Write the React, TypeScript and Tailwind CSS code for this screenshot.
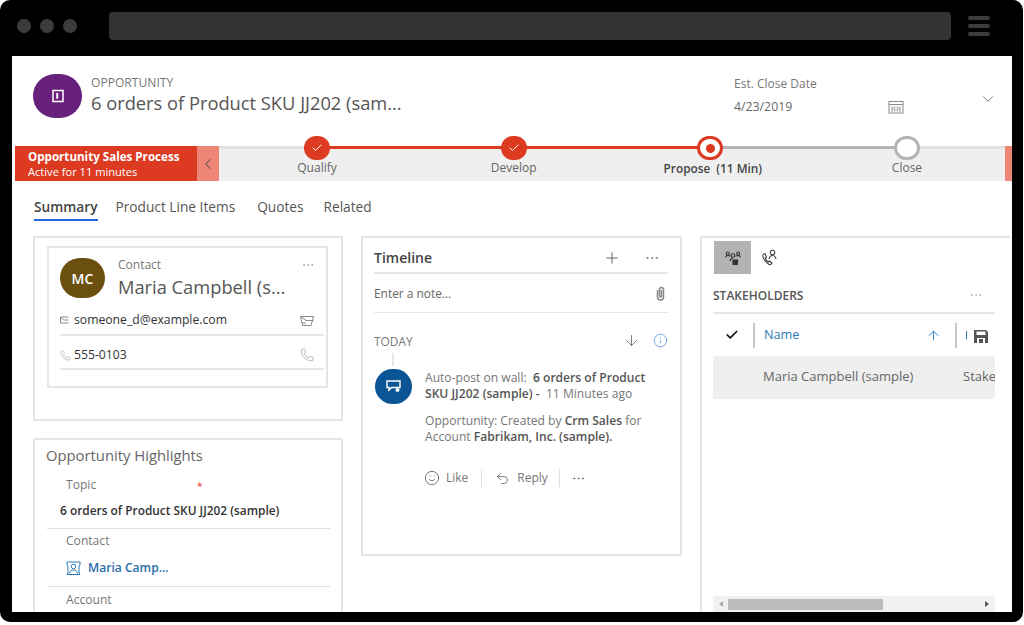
import { ArrowDown, ArrowUp, Check, ChevronDown, ChevronLeft, Info, MoreHorizontal, Phone, Plus, Smile, Undo2 } from "lucide-react";

const FONT = "font-['Open_Sans','Noto_Sans',sans-serif]";

function Step({ label, state }: { label: string; state: "done" | "active" | "todo" }) {
  return (
    <div className="flex w-[100px] flex-col items-center">
      {state === "done" && (
        <div className="flex h-[24px] w-[26px] items-center justify-center rounded-full bg-[#dc3a21]">
          <Check size={12} color="#fff" strokeWidth={2} />
        </div>
      )}
      {state === "active" && (
        <div className="flex h-[24px] w-[26px] items-center justify-center rounded-full border-[3px] border-[#dc3a21] bg-white">
          <div className="h-[9px] w-[9px] rounded-full bg-[#dc3a21]" />
        </div>
      )}
      {state === "todo" && <div className="h-[24px] w-[26px] rounded-full border-[3px] border-[#b4b4b4] bg-white" />}
      <div className={`whitespace-pre leading-[16px] ${state === "active" ? "pl-[5px] text-[11.800px] font-semibold text-[#444]" : "text-[12px] text-[#666]"}`}>
        {label}
      </div>
    </div>
  );
}

function StakeholderIcon() {
  return (
    <svg width="16" height="14" viewBox="0 0 16 14" fill="none" stroke="#333" strokeWidth="1.100">
      <circle cx="2.800" cy="2.500" r="1.500" />
      <circle cx="8" cy="4.500" r="1.800" />
      <circle cx="13.200" cy="2.500" r="1.500" />
      <path d="M.500 6.500c.3-1.300 1.200-2 2.300-2 .8 0 1.500.2 2.800.8M15.500 6.500c-.3-1.300-1.200-2-2.300-2-.8 0-1.500.2-2.800.8" />
      <path d="M5 10c.4-1.700 1.500-3 3-3" />
      <rect x="8" y="9" width="4.500" height="4.500" fill="#333" />
    </svg>
  );
}

function PhoneUserIcon() {
  return (
    <svg width="17" height="17" viewBox="0 0 17 17" fill="none" stroke="#444" strokeWidth="1.100">
      <path d="M2 6c-1 2 3 8 6 9.500 1.500.5 2.500-.5 3-1.500l-2.500-2-1.200 1c-1-.5-2.500-2.500-3-4l1.200-1L4 4.500C3 4.500 2.500 5 2 6z" />
      <circle cx="11.500" cy="3.500" r="2.200" />
      <path d="M8 10c.5-2 1.800-3.500 3.500-3.500S14.500 8 15 10" />
    </svg>
  );
}

function RecordIcon() {
  return (
    <svg width="16" height="16" viewBox="0 0 16 16" fill="none" stroke="#fff">
      <rect x="3" y="2.500" width="10" height="11" strokeWidth="1.500" />
      <rect x="6.500" y="5.500" width="1.500" height="5" fill="#fff" strokeWidth="0.500" />
    </svg>
  );
}

function PostIcon() {
  return (
    <svg width="18" height="16" viewBox="0 0 18 16" fill="none" stroke="#fff" strokeWidth="1.400">
      <path d="M2 2h13v6.500H6.500L4 11V8.500H2z" />
      <circle cx="12.500" cy="11" r="1.800" fill="#fff" strokeWidth="0.500" />
    </svg>
  );
}

function ContactLinkIcon() {
  return (
    <svg width="15" height="14" viewBox="0 0 15 14" fill="none" stroke="#2b7ab8" strokeWidth="1">
      <path d="M1 1h13v3l-1 1v7l1 1.500H1L2 12V5L1 4z" />
      <circle cx="7.500" cy="5.500" r="2.300" />
      <path d="M3.500 12.500c.5-2.500 2-3.500 4-3.500s3.500 1 4 3.500" />
    </svg>
  );
}

function EnvelopeSmall() {
  return (
    <svg width="9" height="8" viewBox="0 0 9 8" fill="none" stroke="#888" strokeWidth="1" className="mb-[2px]">
      <path d="M8.500 1H.500v6h8M.500 1l3 3h5" />
    </svg>
  );
}

function EmailSend() {
  return (
    <svg width="14" height="12" viewBox="0 0 14 12" fill="none" stroke="#888" strokeWidth="1">
      <path d="M.500 1.500h13L11 10.500H2.500L.500 1.500z" />
      <path d="M.500 1.500L6 5.500h7.500" />
      <path d="M2 8h4" />
    </svg>
  );
}

function ClipIcon() {
  return (
    <svg width="9" height="15" viewBox="0 0 9 15" fill="none" stroke="#888" strokeWidth="1.500">
      <path d="M1.500 4v7a3 3 0 0 0 6 0V3.500a2 2 0 0 0-4 0V10a1 1 0 0 0 2 0V4" />
    </svg>
  );
}

function FloppyIcon() {
  return (
    <svg width="14" height="13" viewBox="0 0 14 13" fill="#555">
      <path d="M0 0h12l2 2v11H0z" />
      <rect x="2.500" y="1.500" width="9" height="3.500" fill="#fff" />
      <rect x="3" y="8" width="8" height="5" fill="#fff" />
      <rect x="5" y="9" width="4" height="4" fill="#555" />
    </svg>
  );
}

function App() {
  return (
    <div className={`${FONT} h-[625px] w-[1024px] overflow-hidden bg-white`}>
      <div className="flex h-[622px] w-[1023px] flex-col overflow-hidden rounded-[10px] bg-black">
        <div className="flex h-[56px] shrink-0 items-center pl-[17px] pr-[29px]">
          <div className="flex gap-[9px] pb-[4px]">
            <div className="h-[14px] w-[14px] rounded-full bg-[#3c3c3c]" />
            <div className="h-[14px] w-[14px] rounded-full bg-[#3c3c3c]" />
            <div className="h-[14px] w-[14px] rounded-full bg-[#3c3c3c]" />
          </div>
          <div className="ml-[32px] mb-[4px] h-[28px] w-[842px] rounded-[4px] bg-[#333333]" />
          <div className="ml-[17px] mb-[4px] flex w-[22px] flex-col gap-[4px]">
            <div className="h-[4px] rounded-[2px] bg-[#3c3c3c]" />
            <div className="h-[4px] rounded-[2px] bg-[#3c3c3c]" />
            <div className="h-[4px] rounded-[2px] bg-[#3c3c3c]" />
          </div>
        </div>

        <div className="ml-[12px] flex h-[556px] w-[1000px] flex-col overflow-hidden bg-white">
          <div className="flex h-[89px] shrink-0 items-start pl-[21px] pt-[18px]">
            <div className="flex h-[44px] w-[49px] items-center justify-center rounded-full bg-[#68217a]">
              <RecordIcon />
            </div>
            <div className="ml-[9px] w-[642px]">
              <div className="mt-[1px] text-[12.100px] leading-[16px] text-[#777]">OPPORTUNITY</div>
              <div className="text-[18.300px] leading-[24px] text-[#555]">6 orders of Product SKU JJ202 (sam...</div>
            </div>
            <div className="ml-[1px] w-[171px]">
              <div className="mt-[2px] text-[12px] leading-[16px] text-[#777]">Est. Close Date</div>
              <div className="mt-[6px] flex items-center justify-between pr-[1px] text-[12.300px] leading-[18px] text-[#666]">
                4/23/2019
                <svg width="16" height="14" viewBox="0 0 16 14" fill="none" stroke="#888">
                  <rect x="1" y="1.500" width="14" height="11.500" />
                  <path d="M1 4.500h14" />
                  <path d="M4 6.500v5M6.500 6.500v5M9.500 6.500v5M12 6.500v5" strokeWidth="1.500" stroke="#aaa" />
                </svg>
              </div>
            </div>
            <ChevronDown size={18} color="#666" strokeWidth={1.200} className="ml-[74px] mt-[16px]" />
          </div>

          <div className="relative flex h-[36px] shrink-0 items-stretch">
            <div className="mt-[1px] ml-[3px] flex h-[35px] w-[182px] flex-col justify-center bg-[#dc3a21] pl-[13px] text-white">
              <div className="text-[11.600px] font-bold leading-[15px]">Opportunity Sales Process</div>
              <div className="text-[11.100px] leading-[15px]">Active for 11 minutes</div>
            </div>
            <div className="mt-[1px] flex h-[35px] w-[22px] items-center justify-center bg-[#ee8678]">
              <ChevronLeft size={18} color="#444" strokeWidth={1.300} />
            </div>
            <div className="mt-[1px] flex-1 bg-[#efefef]" />
            <div className="mt-[1px] h-[35px] w-[7px] bg-[#ee8678]" />
            <div className="absolute left-[207px] right-[7px] top-[1px] h-[3px] bg-[#e2e2e2]" />
            <div className="absolute left-[305px] top-[1px] h-[3px] w-[394px] bg-[#dc3a21]" />
            <div className="absolute left-[699px] top-[1px] h-[3px] w-[197px] bg-[#b4b4b4]" />
            <div className="absolute left-[255px] right-[55px] top-[-9px] flex justify-between">
              <Step label="Qualify" state="done" />
              <Step label="Develop" state="done" />
              <Step label="Propose  (11 Min)" state="active" />
              <Step label="Close" state="todo" />
            </div>
          </div>

          <div className="flex h-[55px] shrink-0 items-start pl-[22px] pt-[16px] text-[13.700px] leading-[20px] text-[#555]">
            <div className="border-b-2 border-[#2266e3] pb-[2px] font-semibold text-[#444]">Summary</div>
            <div className="ml-[18px]">Product Line Items</div>
            <div className="ml-[22px]">Quotes</div>
            <div className="ml-[20px]">Related</div>
          </div>

          <div className="flex min-h-0 flex-1 items-start pl-[21px]">
            <div className="flex w-[310px] shrink-0 flex-col gap-[17px]">
              <div className="h-[185px] border-2 border-[#e6e6e6] px-[12px] pt-[8px]">
                <div className="mr-[1px] h-[142px] border-2 border-[#e6e6e6] pl-[11px] pr-[2px] pt-[10px]">
                  <div className="flex">
                    <div className="flex h-[40px] w-[45px] items-center justify-center rounded-full bg-[#6b4f0f] text-[14px] font-semibold text-white">MC</div>
                    <div className="ml-[13px] min-w-0 flex-1">
                      <div className="flex items-center justify-between text-[12px] leading-[12px] text-[#777]">
                        Contact
                        <MoreHorizontal size={14} color="#888" strokeWidth={1} className="mr-[9px]" />
                      </div>
                      <div className="mt-[3px] text-[18.300px] leading-[24px] text-[#555]">Maria Campbell (s...</div>
                    </div>
                  </div>
                  <div className="mt-[2px] flex h-[35px] items-center border-b-2 border-[#e6e6e6] pt-[6px] text-[12.200px] text-[#333]">
                    <EnvelopeSmall />
                    <span className="ml-[5px] flex-1 font-medium">someone_d@example.com</span>
                    <EmailSend />
                    <span className="w-[10px]" />
                  </div>
                  <div className="flex h-[34px] items-center border-b-2 border-[#e6e6e6] pt-[6px] text-[12.200px] text-[#333]">
                    <Phone size={11} color="#888" strokeWidth={1} />
                    <span className="ml-[3px] flex-1 font-medium">555-0103</span>
                    <Phone size={14} color="#888" strokeWidth={1} className="mr-[10px]" />
                  </div>
                </div>
              </div>

              <div className="h-[200px] border-2 border-[#e6e6e6] pl-[11px] pr-[11px] pt-[4px]">
                <div className="text-[14.800px] leading-[22px] text-[#666]">Opportunity Highlights</div>
                <div className="relative ml-[1px] border-b border-[#e0e0e0]">
                  <div className="ml-[19px] mt-[11px] text-[12.100px] leading-[16px] text-[#777]">Topic</div>
                  <div className="absolute left-[150px] top-[2px] text-[10px] text-[#e33]">*</div>
                  <div className="ml-[13px] mt-[9px] mb-[10px] text-[11.900px] font-semibold leading-[16px] text-[#333]">6 orders of Product SKU JJ202 (sample)</div>
                </div>
                <div className="ml-[1px] border-b border-[#e0e0e0]">
                  <div className="ml-[19px] mt-[4px] text-[12.100px] leading-[16px] text-[#777]">Contact</div>
                  <div className="ml-[19px] mt-[11px] mb-[10px] flex items-center gap-[7px] text-[12.100px] font-semibold leading-[16px] text-[#2a6eab]">
                    <ContactLinkIcon />
                    Maria Camp...
                  </div>
                </div>
                <div className="ml-[20px] mt-[5px] text-[12.100px] leading-[16px] text-[#777]">Account</div>
              </div>
            </div>

            <div className="ml-[18px] h-[320px] w-[321px] shrink-0 border-2 border-[#e6e6e6] pl-[11px] pr-[12px] pt-[8px]">
              <div className="flex h-[28px] items-center border-b-2 border-[#e6e6e6] pb-[3px]">
                <div className="flex-1 text-[14px] font-semibold text-[#444]">Timeline</div>
                <Plus size={18} color="#555" strokeWidth={1.200} className="mr-[23px]" />
                <MoreHorizontal size={16} color="#666" strokeWidth={1} className="mr-[8px]" />
              </div>
              <div className="flex h-[39px] items-center border-b border-[#e6e6e6] pr-[3px] pt-[1px] text-[11.900px] text-[#666]">
                <div className="flex-1">Enter a note...</div>
                <ClipIcon />
              </div>
              <div className="mt-[21px] flex h-[16px] items-center">
                <div className="flex-1 text-[11.900px] text-[#777]">TODAY</div>
                <ArrowDown size={17} color="#666" strokeWidth={1.200} className="mb-[4px] mr-[13px]" />
                <Info size={15} color="#4a90d9" strokeWidth={1.200} className="mb-[4px]" />
              </div>
              <div className="ml-[18px] mt-[3px] h-[13px] w-[2px] bg-[#e6e6e6]" />
              <div className="mt-[3px] flex">
                <div className="ml-[1px] flex h-[35px] w-[37px] shrink-0 items-center justify-center rounded-full bg-[#0b5596]">
                  <PostIcon />
                </div>
                <div className="ml-[13px] pt-[1px] text-[12.100px] leading-[16px] text-[#777]">
                  <div>
                    Auto-post on wall:&nbsp; <span className="font-semibold text-[#555]">6 orders of Product</span>
                  </div>
                  <div>
                    <span className="font-semibold text-[#555]">SKU JJ202 (sample) -&nbsp;</span> 11 Minutes ago
                  </div>
                  <div className="mt-[11px]">
                    Opportunity: Created by <span className="font-semibold text-[#555]">Crm Sales</span> for
                  </div>
                  <div>
                    Account <span className="font-semibold text-[#555]">Fabrikam, Inc. (sample).</span>
                  </div>
                </div>
              </div>
              <div className="ml-[50px] mt-[24px] flex h-[18px] items-center text-[12px] text-[#777]">
                <Smile size={16} color="#555" strokeWidth={1.200} />
                <span className="ml-[6px]">Like</span>
                <div className="mx-[13px] h-[18px] w-px bg-[#e0e0e0]" />
                <Undo2 size={15} color="#555" strokeWidth={1.200} />
                <span className="ml-[7px]">Reply</span>
                <div className="mx-[11px] h-[18px] w-px bg-[#e0e0e0]" />
                <MoreHorizontal size={15} color="#555" strokeWidth={1} />
              </div>
            </div>

            <div className="ml-[18px] flex h-[376px] w-[310px] shrink-0 flex-col border-l-2 border-t-2 border-[#e6e6e6] pl-[11px]">
              <div className="ml-[1px] mt-[3px] flex items-center">
                <div className="flex h-[33px] w-[37px] items-center justify-center bg-[#b3b3b3]">
                  <StakeholderIcon />
                </div>
                <div className="ml-[10px] mb-[1px]">
                  <PhoneUserIcon />
                </div>
              </div>
              <div className="w-[282px]">
                <div className="flex h-[40px] items-center border-b-2 border-[#e6e6e6] pt-[5px]">
                  <div className="flex-1 text-[12px] font-semibold text-[#555]">STAKEHOLDERS</div>
                  <MoreHorizontal size={14} color="#999" strokeWidth={1} className="mr-[12px] mb-[2px]" />
                </div>
                <div className="flex h-[42px] items-center text-[12.700px] text-[#2a7ab8]">
                  <Check size={14} color="#111" strokeWidth={3} className="ml-[12px]" />
                  <div className="ml-[14px] h-[25px] w-[2px] bg-[#c8c8c8]" />
                  <div className="ml-[9px] flex-1">Name</div>
                  <ArrowUp size={15} color="#2a7ab8" strokeWidth={1.500} />
                  <div className="ml-[14px] h-[25px] w-[2px] bg-[#c8c8c8]" />
                  <div className="ml-[9px] h-[8px] w-[1.500px] bg-[#2a7ab8]" />
                  <div className="ml-[7px] mr-[7px] mt-[2px]">
                    <FloppyIcon />
                  </div>
                </div>
                <div className="flex h-[43px] items-center overflow-hidden whitespace-nowrap bg-[#efefef] pb-[2px] pl-[50px] text-[13px] text-[#666]">
                  <span className="w-[200px] shrink-0">Maria Campbell (sample)</span>
                  <span>Stake</span>
                </div>
              </div>
              <div className="flex-1" />
              <div className="flex h-[16px] w-[282px] items-center bg-[#f1f1f1]">
                <span className="ml-[6px] h-0 w-0 border-y-[3px] border-r-[4px] border-y-transparent border-r-[#aaa]" />
                <div className="ml-[5px] h-[11px] w-[155px] bg-[#bcbcbc]" />
                <div className="flex-1" />
                <span className="mr-[6px] h-0 w-0 border-y-[3px] border-l-[4px] border-y-transparent border-l-[#555]" />
              </div>
            </div>
          </div>
        </div>
      </div>
    </div>
  );
}

export default App;
